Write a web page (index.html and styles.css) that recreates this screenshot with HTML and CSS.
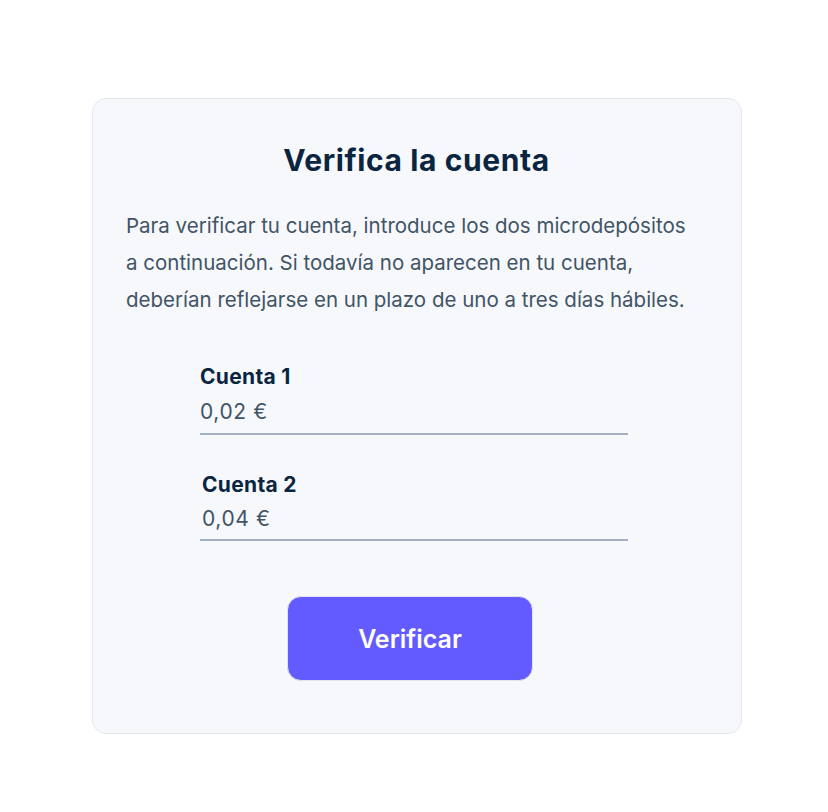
FILE: index.html
```html
<!DOCTYPE html>
<html lang="es">
<head>
<meta charset="utf-8">
<title>Verifica la cuenta</title>
<link rel="stylesheet" href="styles.css">
</head>
<body>
<main class="card">
  <h1 class="title">Verifica la cuenta</h1>
  <p class="intro">Para verificar tu cuenta, introduce los dos microdepósitos a continuación. Si todavía no aparecen en tu cuenta, deberían reflejarse en un plazo de uno a tres días hábiles.</p>
  <form class="form">
    <div class="field">
      <label class="label" for="c1">Cuenta 1</label>
      <input class="input" id="c1" type="text" value="0,02 €">
    </div>
    <div class="field field-second">
      <label class="label" for="c2">Cuenta 2</label>
      <input class="input" id="c2" type="text" value="0,04 €">
    </div>
    <button class="button" type="button">Verificar</button>
  </form>
</main>
</body>
</html>
```

FILE: styles.css
```css
* { box-sizing: border-box; }

html, body {
  margin: 0;
  padding: 0;
  background: #ffffff;
}

body {
  font-family: Inter, "Noto Sans", "Liberation Sans", sans-serif;
  color: #0a2540;
  padding: 98px 0 0 92px;
}

.card {
  width: 650px;
  height: 636px;
  background: #f6f8fb;
  border: 1px solid #e3e8ee;
  border-radius: 14px;
  padding: 41px 34px 0 33px;
}

.title {
  margin: 0;
  text-align: center;
  font-size: 30px;
  font-weight: 700;
  line-height: 40px;
  color: #0a2540;
  letter-spacing: 0.6px;
}

.intro {
  margin: 27px 0 0 0;
  font-size: 20.5px;
  line-height: 37px;
  color: #425466;
  width: 574px;
  letter-spacing: 0;
}

.form {
  display: flex;
  flex-direction: column;
  margin: 46px 0 0 74px;
  width: 428px;
}

.field {
  display: flex;
  flex-direction: column;
}

.field-second {
  margin-top: 37px;
  padding-left: 2px;
}

.label {
  font-size: 21px;
  font-weight: 700;
  line-height: 26px;
  color: #0a2540;
  letter-spacing: 0.3px;
}

.input {
  font-family: inherit;
  font-size: 21px;
  color: #425466;
  background: transparent;
  border: none;
  border-bottom: 2px solid #a3b1c2;
  padding: 9px 0 8px 0;
  margin: 0;
  outline: none;
  width: 428px;
  line-height: 26px;
  letter-spacing: 0.6px;
}

.field-second .input {
  margin-left: -2px;
  padding: 8px 0 7px 2px;
}

.button {
  align-self: flex-start;
  margin: 55px 0 0 87px;
  width: 246px;
  height: 85px;
  background: #635bff;
  color: #ffffff;
  border: 1px solid #dfe3ea;
  border-radius: 14px;
  font-family: inherit;
  font-size: 25px;
  font-weight: 600;
}
```
